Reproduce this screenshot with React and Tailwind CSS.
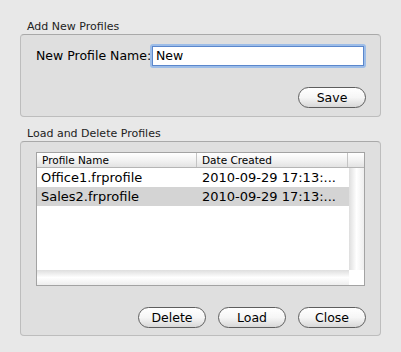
import React from 'react';

const font = { fontFamily: '"DejaVu Sans", "Noto Sans", sans-serif' };

function PillButton({ children }) {
  return (
    <button className="h-[21px] w-[68px] rounded-full border border-[#5e5e5e] bg-gradient-to-b from-white via-[#f6f6f6] to-[#d8d8d8] text-[12.5px] leading-[19px] text-black">
      {children}
    </button>
  );
}

const rows = [
  { name: 'Office1.frprofile', date: '2010-09-29 17:13:...', selected: false },
  { name: 'Sales2.frprofile', date: '2010-09-29 17:13:...', selected: true },
];

export default function App() {
  return (
    <div className="w-[401px] h-[352px] bg-[#e8e8e8] px-[20px] pt-[20px] text-black" style={font}>
      <div className="pl-[7px] h-[14px] text-[11px] leading-[14px] text-[#222]">Add New Profiles</div>
      <div className="h-[83px] rounded-[4px] border border-[#bdbdbd] border-t-[#a9a9a9] bg-[#dfdfdf] pt-[9px] pl-[15px] pr-[14px]">
        <div className="flex items-center h-[24px]">
          <span className="w-[114px] text-[12.5px] leading-[24px] whitespace-nowrap">New Profile Name:</span>
          <div className="w-[216px] h-[24px] rounded-[3px] bg-[#9dbde8] p-[2px]">
            <div className="h-full w-full border border-[#5b87cc] bg-white pl-[3px] text-[12.5px] leading-[18px]">New</div>
          </div>
        </div>
        <div className="flex justify-end mt-[19px]">
          <PillButton>Save</PillButton>
        </div>
      </div>

      <div className="mt-[10px] pl-[7px] h-[14px] text-[11px] leading-[14px] text-[#222]">Load and Delete Profiles</div>
      <div className="h-[195px] rounded-[4px] border border-[#bdbdbd] border-t-[#a9a9a9] bg-[#dfdfdf] pt-[10px] pl-[15px] pr-[14px]">
        <div className="w-[329px] h-[134px] border border-[#a3a3a3] bg-white flex flex-col">
          <div className="flex h-[15px] border-b border-[#b5b5b5] bg-gradient-to-b from-white via-[#f3f3f3] to-[#e3e3e3] text-[10.5px] leading-[14px]">
            <div className="w-[160px] pl-[5px] border-r border-[#c4c4c4]">Profile Name</div>
            <div className="w-[151px] pl-[5px] border-r border-[#c4c4c4]">Date Created</div>
            <div className="flex-1" />
          </div>
          <div className="flex flex-1">
            <div className="flex-1 flex flex-col">
              <div className="flex-1">
                {rows.map((r) => (
                  <div key={r.name} className={`flex h-[19px] text-[13px] leading-[19px] ${r.selected ? 'bg-[#d4d4d4]' : ''}`}>
                    <div className="w-[160px] pl-[4px] whitespace-nowrap overflow-hidden">{r.name}</div>
                    <div className="w-[151px] pl-[5px] whitespace-nowrap overflow-hidden">{r.date}</div>
                  </div>
                ))}
              </div>
              <div className="h-[15px] bg-gradient-to-b from-[#dedede] via-white to-[#eeeeee]" />
            </div>
            <div className="w-[15px] flex flex-col">
              <div className="flex-1 bg-gradient-to-r from-[#dedede] via-white to-[#eeeeee]" />
              <div className="h-[15px] bg-white" />
            </div>
          </div>
        </div>
        <div className="flex justify-end gap-[12px] mt-[21px]">
          <PillButton>Delete</PillButton>
          <PillButton>Load</PillButton>
          <PillButton>Close</PillButton>
        </div>
      </div>
    </div>
  );
}
